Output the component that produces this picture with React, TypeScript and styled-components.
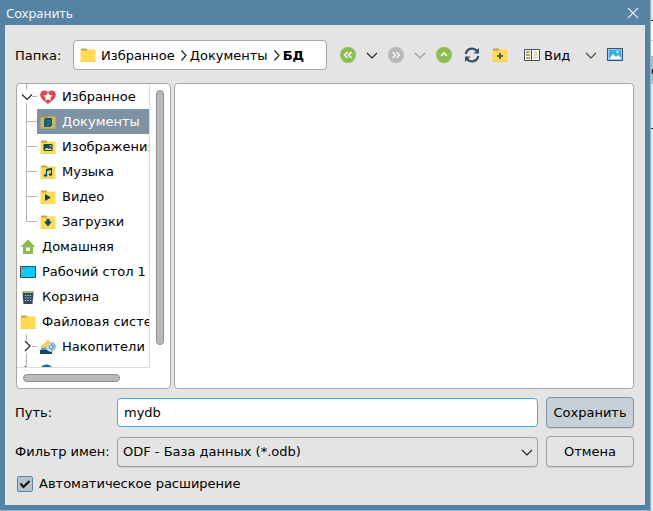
import React, { useState } from "react";
import styled, { createGlobalStyle } from "styled-components";

const GlobalStyle = createGlobalStyle`
  * { box-sizing: border-box; }
  html, body, #root { height: 100%; }
  body {
    margin: 0;
    overflow: hidden;
    background: #e4e4e4;
    color: #000;
    font: 13px/16px "DejaVu Sans", sans-serif;
  }
  button, input, select { font: inherit; color: inherit; margin: 0; }
  svg { display: block; flex: none; }
`;

const Desktop = styled.div`
  display: grid;
  grid-template-columns: minmax(0, 1fr) 2px;
  height: 100%;
`;

const Dialog = styled.main`
  display: flex;
  flex-direction: column;
  min-height: 0;
  padding: 0 5px 5px;
  background: #5682a3;
  border-right: 1px solid #94b2c8;
  border-bottom: 1px solid #94b2c8;
`;

const TitleBar = styled.header`
  display: flex;
  align-items: center;
  justify-content: space-between;
  flex: none;
  height: 25px;
  padding: 0 4px 0 1px;
  color: #f4f7fa;
  font: 13px/16px "Noto Sans", sans-serif;
`;

const Title = styled.h1`
  margin: 0;
  font: inherit;
`;

const PlainButton = styled.button`
  display: flex;
  align-items: center;
  justify-content: center;
  padding: 0;
  border: 0;
  background: none;
`;

const CloseButton = styled(PlainButton)`
  width: 16px;
  height: 16px;
`;

const Content = styled.form`
  display: flex;
  flex-direction: column;
  flex: 1;
  min-height: 0;
  padding: 15px 11px 12px 10px;
  background: #e4e4e4;
`;

const Toolbar = styled.div`
  display: flex;
  align-items: center;
  flex: none;
  height: 30px;
  padding-right: 7px;
`;

const ToolText = styled.span`
  padding-top: 2px;
  white-space: nowrap;
`;

const FolderLabel = styled(ToolText)`
  width: 58px;
  flex: none;
`;

const PathBox = styled.nav`
  display: flex;
  align-items: center;
  flex: 1;
  min-width: 0;
  height: 30px;
  margin-right: 9px;
  padding-left: 6px;
  overflow: hidden;
  background: #fff;
  border: 1px solid #a6a6a6;
  border-radius: 4px;
`;

const Crumb = styled.a<{ $current?: boolean }>`
  padding-top: 2px;
  color: inherit;
  text-decoration: none;
  white-space: nowrap;
  font-weight: ${(p) => (p.$current ? "bold" : "normal")};
`;

const CrumbIcon = styled.span`
  margin-right: 5px;
`;

const CrumbArrow = styled.span`
  padding: 0 3px 0 6px;
`;

const ToolButton = styled(PlainButton)<{ $spaced?: boolean }>`
  width: 24px;
  height: 24px;
  flex: none;
  margin-left: ${(p) => (p.$spaced ? "4px" : "0")};
`;

const ViewButton = styled(PlainButton)`
  flex: none;
  justify-content: flex-start;
  gap: 4px;
  width: 55px;
  height: 24px;
  margin-left: 8px;
  padding-left: 4px;
`;

const Panels = styled.div`
  display: grid;
  grid-template-columns: 155px minmax(0, 1fr);
  grid-template-rows: minmax(0, 1fr);
  gap: 3px;
  flex: 1;
  min-height: 0;
  margin: 13px 0 8px;
  padding-left: 1px;
`;

const FileList = styled.section`
  background: #fff;
  border: 1px solid #a6a6a6;
  border-radius: 4px;
`;

const TreePanel = styled(FileList)`
  display: grid;
  grid-template-columns: minmax(0, 1fr) 20px;
  grid-template-rows: minmax(0, 1fr) 20px;
  overflow: hidden;
`;

const TreeView = styled.ul`
  margin: 0;
  padding: 0;
  overflow: hidden;
  list-style: none;
  border-right: 1px solid #dcdcdc;
  border-bottom: 1px solid #dcdcdc;
`;

const TreeRow = styled.li`
  display: flex;
  height: 25px;
`;

const TreeItem = styled.button<{ $selected?: boolean }>`
  display: flex;
  align-items: center;
  gap: 6px;
  flex: 1;
  min-width: 0;
  padding: 0 0 0 3px;
  overflow: hidden;
  border: 0;
  white-space: nowrap;
  color: ${(p) => (p.$selected ? "#fff" : "#000")};
  background: ${(p) => (p.$selected ? "#7f92a3" : "transparent")};
`;

const VerticalTrack = styled.div`
  padding: 6px 6px 23px;
`;

const HorizontalTrack = styled.div`
  grid-column: 1 / -1;
  padding: 6px 0 0 6px;
`;

const Thumb = styled.div<{ $width: string; $height: string }>`
  width: ${(p) => p.$width};
  height: ${(p) => p.$height};
  background: #bababa;
  border: 1px solid #8e8e8e;
  border-radius: 4px;
`;

const Fields = styled.div`
  display: grid;
  grid-template-columns: 102px minmax(0, 1fr) 96px;
  grid-auto-rows: 31px;
  row-gap: 8px;
  flex: none;
  align-items: center;
`;

const FieldLabel = styled.label`
  white-space: nowrap;
`;

const TextField = styled.input`
  width: 100%;
  height: 29px;
  padding: 0 6px;
  background: #fff;
  border: 1px solid #3daee9;
  border-radius: 4px;
  outline: 0;
`;

const SelectBox = styled.div`
  display: grid;
  align-items: center;

  > * { grid-area: 1 / 1; }
  > svg { justify-self: end; margin-right: 5px; pointer-events: none; }
`;

const Select = styled.select`
  width: 100%;
  height: 30px;
  padding: 0 24px 0 5px;
  appearance: none;
  background: #e4e4e4;
  border: 1px solid #9f9f9f;
  border-radius: 4px;
  box-shadow: 0 1px 0 #cfcfcf;
`;

const PushButton = styled.button<{ $primary?: boolean }>`
  width: 88px;
  height: 31px;
  justify-self: end;
  padding: 0;
  background: ${(p) => (p.$primary ? "#c8d0d7" : "#e4e4e4")};
  border: 1px solid ${(p) => (p.$primary ? "#7f93a5" : "#9f9f9f")};
  border-radius: 4px;
  box-shadow: 0 1px 0 #cfcfcf;
`;

const CheckLabel = styled.label`
  display: flex;
  align-items: center;
  gap: 6px;
  flex: none;
  height: 16px;
  margin-top: 9px;
  margin-bottom: 1px;
  padding-left: 2px;
`;

const CheckBox = styled.span`
  display: grid;
  place-items: center;

  > * { grid-area: 1 / 1; }
  > svg { pointer-events: none; }
`;

const CheckInput = styled.input`
  width: 16px;
  height: 16px;
  appearance: none;
  background: #e4e4e4;
  border: 1px solid #5682a3;
  border-radius: 2px;

  &:checked { background: #b5c3cf; }
  &:not(:checked) + svg { visibility: hidden; }
`;

const Backdrop = styled.aside`
  display: grid;
  grid-template-rows: 21px 20px 16px 27px 45px 1fr;
  min-width: 0;
  overflow: hidden;
`;

const BackdropBand = styled.div<{ $fill: string; $edge?: string }>`
  display: flex;
  align-items: center;
  overflow: hidden;
  background: ${(p) => p.$fill};
  border-bottom: ${(p) => (p.$edge ? `1px solid ${p.$edge}` : "0")};
`;

function Icon({ children, size = 16 }: { children: React.ReactNode; size?: number }) {
  return (
    <svg width={size} height={size} viewBox={`0 0 ${size} ${size}`} fill="none" aria-hidden="true">
      {children}
    </svg>
  );
}

function Chevron({ color = "#232323", right }: { color?: string; right?: boolean }) {
  return right ? (
    <svg width="6" height="12" viewBox="0 0 6 12" fill="none" aria-hidden="true">
      <path d="M.5 1.500 5 6.500.5 11.500" stroke={color} strokeWidth="1.200" />
    </svg>
  ) : (
    <svg width="12" height="8" viewBox="0 0 12 8" fill="none" aria-hidden="true">
      <path d="M1 2 6 7 11 2" stroke={color} strokeWidth="1.200" />
    </svg>
  );
}

function FolderIcon({ children, muted }: { children?: React.ReactNode; muted?: boolean }) {
  return (
    <Icon>
      <path d="M1 1.500h5.500l1.500 2v1H1z" fill={muted ? "#a18d50" : "#c9a343"} />
      <path d="M.5 3.500h7l1-1h7v12H.5z" fill={muted ? "#c5b966" : "#ffda54"} />
      <path d="M.5 14h15v.7H.5z" fill={muted ? "#b5a75e" : "#efca50"} />
      {children}
    </Icon>
  );
}

const ink = "#064b5c";

const icons: Record<string, React.ReactNode> = {
  heart: (
    <Icon>
      <path d="M8 15C5 12.500.2 10 .2 5.800.2 1 5 .2 8 3c3-2.800 7.800-2 7.800 2.800C15.800 10 11 12.500 8 15z" fill="#e0464e" />
      <path d="m8 3.300 1.400 2.600 3 .6-2.100 2.200.4 3L8 10.400l-2.700 1.300.4-3-2.100-2.200 3-.6z" fill="#fff" />
    </Icon>
  ),
  docs: (
    <FolderIcon muted>
      <path d="M4 5h1.500v6.500H11V13H4z" fill="#286574" />
      <path d="M5 4h7v8H5z" fill="#19566a" />
      <path d="M6.500 6.500h4M6.500 8.500h4M6.500 10.500h3" stroke="#4f8998" strokeWidth=".7" />
    </FolderIcon>
  ),
  images: (
    <FolderIcon>
      <rect x="3.500" y="5" width="9" height="7" rx="1" fill={ink} />
      <path d="m4.500 11 2-2.500 2 1.500 1.500-1 2 2z" fill="#ffda54" />
      <circle cx="10.500" cy="6.800" r=".9" fill="#ffda54" />
    </FolderIcon>
  ),
  music: (
    <FolderIcon>
      <path d="M6.500 11V5.500l5-1V10" stroke={ink} strokeWidth="1.200" />
      <path d="M6 5.500 12 4v1.700L6 7.200z" fill={ink} />
      <ellipse cx="5.500" cy="11.500" rx="1.700" ry="1.300" fill={ink} />
      <ellipse cx="10.500" cy="10.500" rx="1.700" ry="1.300" fill={ink} />
    </FolderIcon>
  ),
  video: <FolderIcon><path d="m5 5 6 3.500L5 12z" fill={ink} /></FolderIcon>,
  downloads: <FolderIcon><path d="M6.500 5h3v2.500H12l-4 5-4-5h2.500z" fill={ink} /></FolderIcon>,
  home: (
    <Icon>
      <path d="M8 .5 15.500 8H13v7H3V8H.5z" fill="#8aba50" />
      <path d="M6 8.500h4v3.500H6z" fill="#fff" />
    </Icon>
  ),
  desktop: (
    <Icon>
      <path d="M.5 2.500h15v11H.5z" fill="#00ccff" stroke="#294f6b" />
      <path d="M2 4h1.500v1.500H2z" fill="#ed615e" />
      <path d="M2 6.500h1.500V8H2z" fill="#efb83e" />
      <path d="M2 9h1.500v1.500H2z" fill="#83b746" />
      <path d="M4.500 4h1v1h-1z" fill="#28799b" />
    </Icon>
  ),
  trash: (
    <Icon>
      <path d="M2 2h12v2H2z" fill="#9bc675" />
      <path d="M2.500 4h11L12.500 15h-9z" fill="#34495e" />
      <path d="M5 6.500h6.200M5 9h6.200M5 11.500h6.200" stroke="#b7c7d3" strokeWidth="1.200" strokeDasharray="1.400 1" />
    </Icon>
  ),
  folder: <FolderIcon />,
  drives: (
    <Icon>
      <path d="M2 6h10l2 6H.5z" fill="#4f9de0" />
      <path d="M0 11h12v4H0z" fill="#164463" />
      <circle cx="11" cy="8" r="5" fill="#c2d9ea" />
      <path d="M11 3a5 5 0 0 1 5 5l-5 5z" fill="#91b8d8" />
      <circle cx="11" cy="8" r="1.600" fill="#f5f9fc" stroke="#5b94bd" />
      <path d="m2 7 6-6.500 2.500 2.500L5 9H2z" fill="#f8cd50" />
    </Icon>
  ),
  network: (
    <Icon>
      <circle cx="6.500" cy="8" r="7.500" fill="#1673a8" />
      <path d="M3.500 2.500c-2 2-3 6-2 9M7 1c2 3 2 8 0 14M1 4.500h11" stroke="#0a4c74" />
    </Icon>
  ),
};

type Branch = "root-open" | "child" | "last-child" | "root-closed" | "none";

function BranchLines({ branch }: { branch: Branch }) {
  if (branch === "none") return null;
  const line = "#b4b4b4";
  return (
    <svg width="20" height="25" viewBox="0 0 20 25" fill="none" aria-hidden="true">
      {branch === "root-open" && (
        <>
          <path d="M9.500 0v6M9.500 19v6M15 12.500h5" stroke={line} />
          <path d="m5 10.500 5 5 5-5" stroke="#232323" strokeWidth="1.200" />
        </>
      )}
      {branch === "child" && <path d="M9.500 0v25M9.500 12.500H20" stroke={line} />}
      {branch === "last-child" && <path d="M9.500 0v12.500H20" stroke={line} />}
      {branch === "root-closed" && (
        <>
          <path d="M9.500 0v6M9.500 19v6M15 12.500h5" stroke={line} />
          <path d="m8 7 5 5-5 5" stroke="#232323" strokeWidth="1.200" />
        </>
      )}
    </svg>
  );
}

const places: { name: string; icon: string; branch: Branch }[] = [
  { name: "Избранное", icon: "heart", branch: "root-open" },
  { name: "Документы", icon: "docs", branch: "child" },
  { name: "Изображения", icon: "images", branch: "child" },
  { name: "Музыка", icon: "music", branch: "child" },
  { name: "Видео", icon: "video", branch: "child" },
  { name: "Загрузки", icon: "downloads", branch: "last-child" },
  { name: "Домашняя", icon: "home", branch: "none" },
  { name: "Рабочий стол 1", icon: "desktop", branch: "none" },
  { name: "Корзина", icon: "trash", branch: "none" },
  { name: "Файловая система", icon: "folder", branch: "none" },
  { name: "Накопители", icon: "drives", branch: "root-closed" },
  { name: "Сеть", icon: "network", branch: "root-closed" },
];

export default function App() {
  const [selected, setSelected] = useState("Документы");
  const [path, setPath] = useState("mydb");
  const [autoExtension, setAutoExtension] = useState(true);

  return (
    <>
      <GlobalStyle />
      <Desktop>
        <Dialog>
          <TitleBar>
            <Title>Сохранить</Title>
            <CloseButton type="button" aria-label="Закрыть">
              <Icon size={12}>
                <path d="m1 1 10 10M11 1 1 11" stroke="#e3ebf1" strokeWidth="1.100" />
              </Icon>
            </CloseButton>
          </TitleBar>

          <Content onSubmit={(e) => e.preventDefault()}>
            <Toolbar>
              <FolderLabel id="folder-label">Папка:</FolderLabel>
              <PathBox aria-labelledby="folder-label">
                <CrumbIcon><FolderIcon /></CrumbIcon>
                <Crumb href="#favorites">Избранное</Crumb>
                <CrumbArrow><Chevron right /></CrumbArrow>
                <Crumb href="#documents">Документы</Crumb>
                <CrumbArrow><Chevron right /></CrumbArrow>
                <Crumb href="#db" $current>БД</Crumb>
              </PathBox>
              <ToolButton type="button" aria-label="Назад">
                <Icon>
                  <circle cx="8" cy="8" r="8" fill="#8bbd51" />
                  <path d="M7.500 5 4.500 8l3 3M11.500 5l-3 3 3 3" stroke="#fff" strokeWidth="1.500" />
                </Icon>
              </ToolButton>
              <ToolButton type="button" aria-label="История назад"><Chevron /></ToolButton>
              <ToolButton type="button" aria-label="Вперёд">
                <Icon>
                  <circle cx="8" cy="8" r="8" fill="#b9b9b9" />
                  <path d="m4.500 5 3 3-3 3M8.500 5l3 3-3 3" stroke="#f2f2f2" strokeWidth="1.500" />
                </Icon>
              </ToolButton>
              <ToolButton type="button" aria-label="История вперёд"><Chevron color="#999" /></ToolButton>
              <ToolButton type="button" aria-label="Вверх">
                <Icon>
                  <circle cx="8" cy="8" r="8" fill="#8bbd51" />
                  <path d="m5 9 3-3 3 3" stroke="#fff" strokeWidth="1.600" />
                </Icon>
              </ToolButton>
              <ToolButton type="button" aria-label="Обновить" $spaced>
                <Icon>
                  <path d="M1.800 7a6.300 6.300 0 0 1 11-3.200M14.200 9a6.300 6.300 0 0 1-11 3.200" stroke="#34506b" strokeWidth="2.200" />
                  <path d="M15 1v5.500H9.500zM1 15V9.500h5.500z" fill="#34506b" />
                </Icon>
              </ToolButton>
              <ToolButton type="button" aria-label="Создать папку" $spaced>
                <FolderIcon><path d="M8 6v6M5 9h6" stroke="#536052" strokeWidth="2" /></FolderIcon>
              </ToolButton>
              <ViewButton type="button">
                <Icon>
                  <path d="M.5 2.500h15v11H.5z" fill="#fff" stroke="#34506b" />
                  <path d="M2 4h4v2H2zM2 7h4v2H2zM2 10h4v2H2z" fill="#c5a344" />
                  <path d="M7.500 3v10" stroke="#34506b" />
                  <path d="M9 4h5v8H9z" fill="#f2edda" />
                  <path d="M10 5.500h3M10 8h3M10 10.500h3" stroke="#d5c58c" />
                </Icon>
                <ToolText>Вид</ToolText>
              </ViewButton>
              <ToolButton type="button" aria-label="Параметры вида" $spaced><Chevron color="#444" /></ToolButton>
              <ToolButton type="button" aria-label="Предпросмотр">
                <Icon>
                  <path d="M.5 1.500h15v12H.5z" fill="#3daae9" stroke="#34506b" />
                  <path d="M1.500 2.500h13v10h-13z" stroke="#d3eafa" strokeWidth=".6" />
                  <path d="m2 12 4-5 3 3 2-2 3 3v1z" fill="#fff" />
                  <circle cx="10.500" cy="5" r="1.200" fill="#fff" />
                </Icon>
              </ToolButton>
            </Toolbar>

            <Panels>
              <TreePanel aria-label="Места">
                <TreeView>
                  {places.map((place) => (
                    <TreeRow key={place.name}>
                      <BranchLines branch={place.branch} />
                      <TreeItem
                        type="button"
                        $selected={place.name === selected}
                        onClick={() => setSelected(place.name)}
                      >
                        {icons[place.icon]}
                        {place.name}
                      </TreeItem>
                    </TreeRow>
                  ))}
                </TreeView>
                <VerticalTrack><Thumb $width="8px" $height="100%" /></VerticalTrack>
                <HorizontalTrack><Thumb $width="97px" $height="8px" /></HorizontalTrack>
              </TreePanel>
              <FileList aria-label="Файлы" />
            </Panels>

            <Fields>
              <FieldLabel htmlFor="path">Путь:</FieldLabel>
              <TextField id="path" value={path} onChange={(e) => setPath(e.target.value)} />
              <PushButton type="submit" $primary>Сохранить</PushButton>
              <FieldLabel htmlFor="filter">Фильтр имен:</FieldLabel>
              <SelectBox>
                <Select id="filter">
                  <option>ODF - База данных (*.odb)</option>
                </Select>
                <Chevron />
              </SelectBox>
              <PushButton type="button">Отмена</PushButton>
            </Fields>

            <CheckLabel>
              <CheckBox>
                <CheckInput
                  type="checkbox"
                  checked={autoExtension}
                  onChange={(e) => setAutoExtension(e.target.checked)}
                />
                <Icon size={12}>
                  <path d="m1.500 5.500 3 3.500L10.500 3" stroke="#111" strokeWidth="2.200" />
                </Icon>
              </CheckBox>
              Автоматическое расширение
            </CheckLabel>
          </Content>
        </Dialog>
        <Backdrop aria-hidden="true">
          <BackdropBand $fill="#e4e4e4" $edge="#222" />
          <BackdropBand $fill="#fff" $edge="#bcbcbc" />
          <BackdropBand $fill="#fff" $edge="#7fb2d6" />
          <BackdropBand $fill="#bdbdbd">с</BackdropBand>
          <BackdropBand $fill="#e4e4e4" $edge="#222" />
          <BackdropBand $fill="#e8e8e8" />
        </Backdrop>
      </Desktop>
    </>
  );
}
